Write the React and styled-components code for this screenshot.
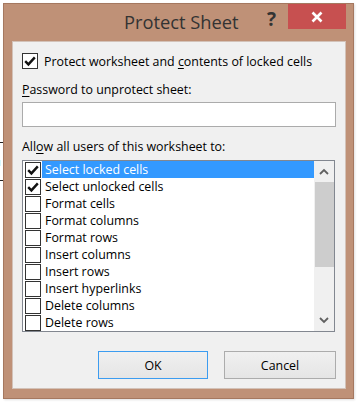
import React from "react";
import styled, { createGlobalStyle } from "styled-components";

const GlobalStyle = createGlobalStyle`
  html, body {
    margin: 0;
    padding: 0;
    background: #ffffff;
  }
  * {
    box-sizing: border-box;
  }
`;

const FONT = `"Segoe UI", "Open Sans", "Noto Sans", sans-serif`;

const Page = styled.div`
  position: relative;
  width: 360px;
  height: 405px;
  padding: 3px 0 0 3px;
  overflow: hidden;
  font-family: ${FONT};
`;

// bit of the sheet behind the dialog, peeking out at the left edge
const BehindCell = styled.div`
  position: absolute;
  left: -6px;
  top: 142px;
  width: 10px;
  height: 39px;
  border-top: 1px solid #222;
  border-bottom: 1px solid #222;
  font-size: 11px;
  line-height: 14px;
  padding-top: 12px;
  color: #222;
`;

const Window = styled.div`
  position: relative;
  width: 351px;
  height: 396px;
  background: #bf9177;
  border: 1px solid #a57860;
  box-shadow: 1px 1px 2px rgba(0, 0, 0, 0.12);
  display: flex;
  flex-direction: column;
`;

const TitleBar = styled.div`
  height: 37px;
  position: relative;
`;

const Title = styled.div`
  position: absolute;
  left: 120px;
  top: 5px;
  font-size: 18.3px;
  line-height: 26px;
  color: #333;
`;

const Help = styled.div`
  position: absolute;
  left: 263px;
  top: 2px;
  font-size: 19px;
  font-weight: 700;
  line-height: 26px;
  color: #333;
`;

const Close = styled.div`
  position: absolute;
  left: 284px;
  top: 0;
  width: 58px;
  height: 25px;
  background: #c75050;
  display: flex;
  align-items: center;
  justify-content: center;
`;

const Content = styled.div`
  flex: 1;
  margin: 0 7px 9px 8px;
  background: #f0f0f0;
  border: 1px solid #d3c2b8;
  padding: 11px 8px 9px 9px;
  display: flex;
  flex-direction: column;
  font-size: 12.4px;
  color: #000;
`;

const CheckRow = styled.label`
  display: flex;
  align-items: center;
  gap: 6px;
  height: 16px;
`;

const Box = styled.span`
  width: 16px;
  height: 16px;
  flex: none;
  background: #fff;
  border: 1px solid #333;
  display: flex;
  align-items: center;
  justify-content: center;
`;

const Label = styled.div`
  margin-top: ${p => p.$top}px;
  line-height: 16px;
`;

const Key = styled.span`
  text-decoration: underline;
  text-underline-offset: 2px;
`;

const Input = styled.div`
  margin-top: 4px;
  height: 25px;
  width: 314px;
  background: #fff;
  border: 1px solid #ababab;
`;

const ListBox = styled.div`
  margin-top: 5px;
  width: 313px;
  height: 172px;
  border: 1px solid #828790;
  background: #fff;
  display: flex;
`;

const Items = styled.div`
  flex: 1;
  padding-left: 2px;
`;

const Item = styled.div`
  height: 17px;
  display: flex;
  align-items: center;
`;

const ItemText = styled.span`
  flex: 1;
  height: 17px;
  margin-left: 1px;
  padding-left: 3px;
  line-height: 17px;
  white-space: nowrap;
  background: ${p => (p.$selected ? "#3399ff" : "transparent")};
  color: ${p => (p.$selected ? "#fff" : "#000")};
`;

const ScrollBar = styled.div`
  width: 20px;
  background: #f0f0f0;
  display: flex;
  flex-direction: column;
`;

const Arrow = styled.div`
  height: 21px;
  display: flex;
  align-items: center;
  justify-content: center;
`;

const Track = styled.div`
  flex: 1;
`;

const Thumb = styled.div`
  height: 85px;
  margin-left: 1px;
  background: #cdcdcd;
`;

const Buttons = styled.div`
  margin-top: auto;
  display: flex;
  justify-content: flex-end;
  gap: 16px;
  padding-right: 1px;
`;

const Button = styled.div`
  width: ${p => p.$w}px;
  height: 28px;
  border: 1px solid ${p => (p.$default ? "#3c9cf0" : "#acacac")};
  background: linear-gradient(#f0f0f0, #e5e5e5);
  display: flex;
  align-items: center;
  justify-content: center;
  color: #000;
`;

const Check = () => (
  <svg width="12" height="12" viewBox="0 0 12 12">
    <path d="M1.2 6.2 L4.4 9.4 L10.8 2.4" fill="none" stroke="#111" strokeWidth="2.4" />
  </svg>
);

const Chevron = ({ up }) => (
  <svg width="10" height="7" viewBox="0 0 10 7">
    <path
      d={up ? "M1 6 L5 2 L9 6" : "M1 1 L5 5 L9 1"}
      fill="none"
      stroke="#606060"
      strokeWidth="1.8"
    />
  </svg>
);

const items = [
  { name: "Select locked cells", checked: true, selected: true },
  { name: "Select unlocked cells", checked: true },
  { name: "Format cells" },
  { name: "Format columns" },
  { name: "Format rows" },
  { name: "Insert columns" },
  { name: "Insert rows" },
  { name: "Insert hyperlinks" },
  { name: "Delete columns" },
  { name: "Delete rows" },
];

const App = () => (
  <Page>
    <GlobalStyle />
    <BehindCell>u</BehindCell>
    <Window>
      <TitleBar>
        <Title>Protect Sheet</Title>
        <Help>?</Help>
        <Close>
          <svg width="12" height="12" viewBox="0 0 12 12">
            <path d="M1.5 1.5 L10.5 10.5 M10.5 1.5 L1.5 10.5" stroke="#fff" strokeWidth="2.6" />
          </svg>
        </Close>
      </TitleBar>
      <Content>
        <CheckRow>
          <Box>
            <Check />
          </Box>
          <span>
            Protect worksheet and <Key>c</Key>ontents of locked cells
          </span>
        </CheckRow>
        <Label $top={13}>
          <Key>P</Key>assword to unprotect sheet:
        </Label>
        <Input />
        <Label $top={12}>
          All<Key>o</Key>w all users of this worksheet to:
        </Label>
        <ListBox>
          <Items>
            {items.map((item, i) => (
              <Item key={i}>
                <Box>{item.checked && <Check />}</Box>
                <ItemText $selected={item.selected}>{item.name}</ItemText>
              </Item>
            ))}
          </Items>
          <ScrollBar>
            <Arrow>
              <Chevron up />
            </Arrow>
            <Track>
              <Thumb />
            </Track>
            <Arrow>
              <Chevron />
            </Arrow>
          </ScrollBar>
        </ListBox>
        <Buttons>
          <Button $default $w={110}>OK</Button>
          <Button $w={112}>Cancel</Button>
        </Buttons>
      </Content>
    </Window>
  </Page>
);

export default App;
